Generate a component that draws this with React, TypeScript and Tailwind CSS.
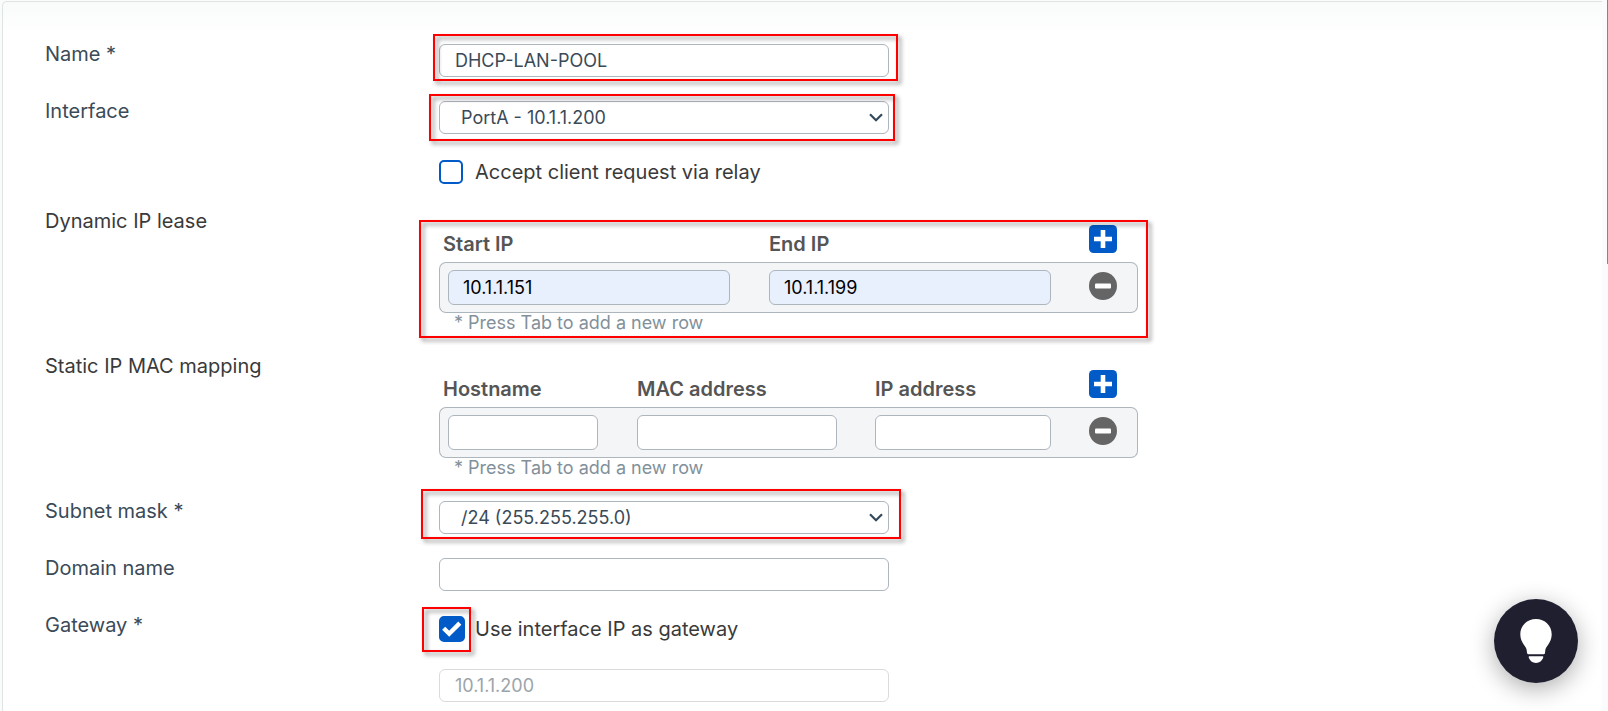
import { useId, type ReactNode } from "react";

const fieldClass =
  "block w-full rounded-[6px] border border-[#adb5bd] bg-white text-[18px] text-[#3a4a58] outline-none";

function Highlight({ className }: { className: string }) {
  return (
    <span
      aria-hidden="true"
      className={`pointer-events-none absolute z-10 border-2 border-[#fe0000] drop-shadow-[3px_3px_2px_rgba(0,0,0,0.45)] ${className}`}
    />
  );
}

function Row({ label, htmlFor, dark, children }: { label?: string; htmlFor?: string; dark?: boolean; children: ReactNode }) {
  const tone = dark ? "text-[#3a3a3a]" : "text-[#3a4a58]";
  return (
    <div className="flex items-start">
      <div className={`w-[394px] shrink-0 text-[20px] leading-[20px] ${tone}`}>
        {htmlFor ? <label htmlFor={htmlFor}>{label}</label> : label}
      </div>
      <div className="min-w-0 grow">{children}</div>
    </div>
  );
}

function SelectField({ id, value }: { id: string; value: string }) {
  return (
    <>
      <select id={id} defaultValue={value} className={`${fieldClass} h-[33px] appearance-none pl-[21px] pr-10`}>
        <option>{value}</option>
      </select>
      <svg viewBox="0 0 14 9" className="pointer-events-none absolute right-[6px] top-3 h-[9px] w-[14px]" fill="none" stroke="#34495a" strokeWidth="2.2">
        <path d="M1 1.2 7 7.2l6-6" />
      </svg>
    </>
  );
}

function CheckField({ label, checked }: { label: string; checked?: boolean }) {
  const id = useId();
  return (
    <div className="flex items-center gap-3 pb-0.5">
      <span className="relative flex shrink-0">
        <input
          id={id}
          type="checkbox"
          defaultChecked={checked}
          className="peer size-6 appearance-none rounded-[5px] border-2 border-[#005bc8] bg-white checked:size-[26px] checked:-mr-0.5 checked:bg-[#005bc8]"
        />
        <svg viewBox="0 0 26 26" className="pointer-events-none absolute left-0 top-0 hidden size-[26px] peer-checked:block" fill="none" stroke="#fff" strokeWidth="4.4">
          <path d="m4.7 12.2 5.500 5.500L20.800 7.100" />
        </svg>
      </span>
      <label htmlFor={id} className="text-[20px] leading-[24px] text-[#3a3a3a]">{label}</label>
    </div>
  );
}

type Column = { name: string; width: string; value?: string };

function LeaseTable({ columns }: { columns: Column[] }) {
  return (
    <div className="max-w-[699px]">
      <table className="w-full table-fixed border-separate border-spacing-0">
        <colgroup>
          {columns.map((c) => (
            <col key={c.name} className={c.width} />
          ))}
          <col className="w-[49px]" />
        </colgroup>
        <thead>
          <tr className="h-[51px]">
            {columns.map((c) => (
              <th key={c.name} scope="col" className="p-0 pt-[15px] text-left text-[20px] leading-[24px] font-semibold text-[#555] first:pl-1">
                {c.name}
              </th>
            ))}
            <th className="p-0 pt-[5px]">
              <button type="button" aria-label="Add row" className="block">
                <svg viewBox="0 0 28 28" className="size-7">
                  <rect x="0" y="0" width="28" height="28" rx="4.500" fill="#005bc8" />
                  <path d="M14 5v18M5 14h18" stroke="#fff" strokeWidth="4.600" />
                </svg>
              </button>
            </th>
          </tr>
        </thead>
        <tbody>
          <tr className="h-[51px]">
            {columns.map((c) => (
              <td key={c.name} className="border-y border-[#adb5bd] bg-[#f4f5f7] p-0 pr-[38px] first:rounded-l-[7px] first:border-l first:pl-2 first:pr-[39px]">
                <input
                  type="text"
                  aria-label={c.name}
                  defaultValue={c.value}
                  className={
                    c.value
                      ? "block h-[35px] w-full rounded-[6px] border border-[#adb5bd] bg-[#e8effd] px-3.5 text-[18px] text-black outline-none"
                      : `${fieldClass} h-[35px] px-3.5`
                  }
                />
              </td>
            ))}
            <td className="rounded-r-[7px] border-y border-r border-[#adb5bd] bg-[#f4f5f7] p-0 pb-1">
              <button type="button" aria-label="Remove row" className="block">
                <svg viewBox="0 0 28 28" className="size-7">
                  <circle cx="14" cy="14" r="14" fill="#656565" />
                  <rect x="6" y="11.500" width="16" height="5" rx="1" fill="#fff" />
                </svg>
              </button>
            </td>
          </tr>
        </tbody>
      </table>
      <p className="pl-[15px] text-[18px] leading-[19px] text-[#82909a]">* Press Tab to add a new row</p>
    </div>
  );
}

const dynamicColumns: Column[] = [
  { name: "Start IP", width: "w-[330px]", value: "10.1.1.151" },
  { name: "End IP", width: "w-[320px]", value: "10.1.1.199" },
];

const staticColumns: Column[] = [
  { name: "Hostname", width: "w-[198px]" },
  { name: "MAC address", width: "w-[238px]" },
  { name: "IP address", width: "w-[214px]" },
];

export default function App() {
  return (
    <div className="flex min-h-screen bg-[#fafbfb] pl-0.5 pt-px font-['Inter',sans-serif]">
      <form className="flex grow flex-col gap-6 rounded-tl-[5px] border-l border-t border-[#dfe3e4] bg-white bg-linear-to-b from-[#f9fafa] to-white to-[32px] pb-2 pl-[42px] pt-[42px]">
        <Row label="Name *" htmlFor="name">
          <div className="relative max-w-[450px]">
            <input id="name" type="text" defaultValue="DHCP-LAN-POOL" className={`${fieldClass} h-[33px] px-[15px]`} />
            <Highlight className="-bottom-1 -left-1.5 -right-[9px] -top-2.5" />
          </div>
        </Row>
        <Row label="Interface" htmlFor="interface">
          <div className="relative max-w-[450px]">
            <SelectField id="interface" value="PortA - 10.1.1.200" />
            <Highlight className="-bottom-[7px] -left-2.5 -right-1.5 -top-[7px]" />
          </div>
        </Row>
        <Row>
          <div className="flex h-[29px] items-center">
            <CheckField label="Accept client request via relay" />
          </div>
        </Row>
        <Row label="Dynamic IP lease" dark>
          <div className="relative max-w-[699px]">
            <LeaseTable columns={dynamicColumns} />
            <Highlight className="-bottom-1.5 -left-5 -right-2.5 top-[9px]" />
          </div>
        </Row>
        <Row label="Static IP MAC mapping" dark>
          <LeaseTable columns={staticColumns} />
        </Row>
        <Row label="Subnet mask *" htmlFor="subnet">
          <div className="relative max-w-[450px]">
            <SelectField id="subnet" value="/24 (255.255.255.0)" />
            <Highlight className="-bottom-[5px] -left-[18px] -right-3 -top-3" />
          </div>
        </Row>
        <Row label="Domain name" htmlFor="domain">
          <div className="max-w-[450px]">
            <input id="domain" type="text" className={`${fieldClass} h-[33px] px-[15px]`} />
          </div>
        </Row>
        <Row label="Gateway *">
          <div className="relative flex h-[30px] items-center">
            <CheckField label="Use interface IP as gateway" checked />
            <Highlight className="-bottom-[7px] -left-[17px] -top-2 w-[49px]" />
          </div>
        </Row>
        <Row>
          <div className="max-w-[450px]">
            <input
              type="text"
              aria-label="Gateway IP"
              disabled
              defaultValue="10.1.1.200"
              className="block h-[33px] w-full rounded-[6px] border border-[#d9dbdd] bg-white px-[15px] text-[18px] text-[#9ca4aa]"
            />
          </div>
        </Row>
      </form>
      <div aria-hidden="true" className="-mt-px flex w-1.5 shrink-0 justify-end bg-[#fbfbfb]">
        <span className="h-[264px] w-px rounded-b-sm bg-[#858585]" />
      </div>
      <button
        type="button"
        aria-label="Tips"
        className="fixed bottom-7 right-[30px] flex size-[84px] items-center justify-center rounded-full bg-[#1f1f30] shadow-[0_6px_24px_rgba(0,0,0,0.32)]"
      >
        <svg viewBox="0 0 32 44" className="h-11 w-8" fill="#fff">
          <path d="M16 0C7 0 .3 6.700.3 15.300c0 4.200 1.500 7.400 3.400 10.200 1.800 2.700 3 3.900 3.100 6.500l.2 2c.1.800.6 1.200 1.400 1.200h15.200c.8 0 1.300-.4 1.400-1.200l.2-2c.1-2.600 1.300-3.800 3.100-6.500 1.900-2.800 3.400-6 3.400-10.200C31.700 6.700 25 0 16 0Z" />
          <path d="M9.500 37.200h13c.6 0 1 .5.8 1.100C22.300 41.700 19.500 44 16 44s-6.300-2.300-7.300-5.700c-.2-.6.2-1.100.8-1.100Z" />
        </svg>
      </button>
    </div>
  );
}
